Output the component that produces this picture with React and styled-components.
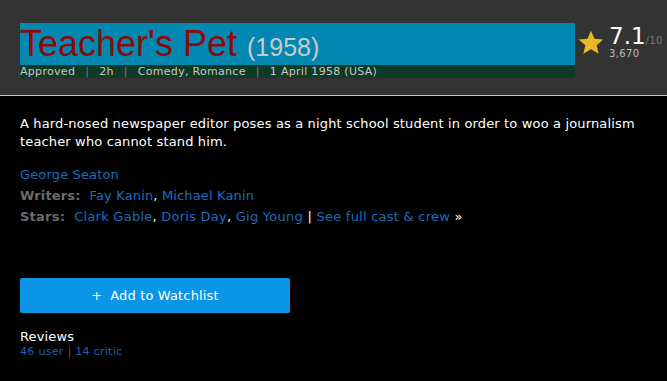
import React from "react";
import styled, { createGlobalStyle } from "styled-components";

const Global = createGlobalStyle`
  html, body {
    margin: 0;
    padding: 0;
    background: #000;
  }
  body {
    font-family: "DejaVu Sans", Verdana, sans-serif;
    font-size: 13px;
  }
`;

const Page = styled.div`
  width: 667px;
  min-height: 381px;
  background: #000;
`;

const Header = styled.div`
  display: flex;
  align-items: flex-start;
  background: #333333;
  padding: 23px 0 0 20px;
  height: 72px;
  border-bottom: 1px solid #c8c8c8;
`;

const TitleBlock = styled.div`
  width: 555px;
`;

const TitleBar = styled.h1`
  margin: 0;
  height: 42px;
  background: #0288b0;
  font-family: "Liberation Sans", Arial, sans-serif;
  font-weight: normal;
  font-size: 36px;
  line-height: 42px;
  color: #8b0a0a;
  white-space: nowrap;
`;

const Year = styled.span`
  font-size: 25px;
  color: #c9c9c9;
`;

const Subtext = styled.div`
  height: 13px;
  background: #0f3a26;
  color: #c8c8c8;
  font-size: 11px;
  line-height: 13px;
  letter-spacing: 0.3px;
  white-space: nowrap;
`;

const Sep = styled.span`
  color: #777;
  margin: 0 10px;
`;

const Rating = styled.div`
  display: flex;
  align-items: flex-start;
  margin-left: 2px;
  padding-top: 5px;
`;

const Star = styled.svg`
  width: 28px;
  height: 27px;
  margin-top: 1px;
`;

const Score = styled.div`
  display: flex;
  flex-direction: column;
  margin-left: 4px;
`;

const Value = styled.div`
  color: #fff;
  font-size: 23px;
  line-height: 17px;
  span {
    font-size: 10px;
    color: #777;
    letter-spacing: 0.3px;
  }
`;

const Votes = styled.div`
  color: #bbb;
  font-size: 10px;
  line-height: 10px;
  letter-spacing: 0.4px;
`;

const Body = styled.div`
  padding: 19px 20px 0 20px;
  letter-spacing: 0.15px;
`;

const Plot = styled.p`
  margin: 0 0 13px;
  color: #fff;
  font-size: 13px;
  line-height: 18px;
`;

const Credit = styled.div`
  line-height: 21px;
  color: #fff;
  letter-spacing: ${(p) => (p.$wide ? "0.25px" : "0.15px")};
`;

const Label = styled.span`
  font-weight: bold;
  color: #6b6b6b;
  margin-right: 9px;
`;

const Link = styled.a`
  color: ${(p) => (p.$dim ? "#1a62a8" : "#1d6cbc")};
  text-decoration: none;
`;

const Button = styled.button`
  display: flex;
  align-items: center;
  justify-content: center;
  gap: 8px;
  margin-top: 51px;
  width: 270px;
  height: 35px;
  border: none;
  border-radius: 2px;
  background: #0a95e6;
  color: #fff;
  font-family: "DejaVu Sans", Verdana, sans-serif;
  font-size: 13px;
  letter-spacing: 0.15px;
`;

const Reviews = styled.div`
  margin-top: 15px;
  color: #fff;
  font-size: 13px;
  line-height: 17px;
`;

const ReviewLinks = styled.div`
  font-size: 11px;
  line-height: 14px;
  letter-spacing: 0.3px;
`;

const Bar = styled.span`
  color: ${(p) => p.$color || "#fff"};
`;

export default function App() {
  return (
    <Page>
      <Global />
      <Header>
        <TitleBlock>
          <TitleBar>
            Teacher's Pet <Year>(1958)</Year>
          </TitleBar>
          <Subtext>
            Approved<Sep>|</Sep>2h<Sep>|</Sep>Comedy, Romance<Sep>|</Sep>1 April 1958 (USA)
          </Subtext>
        </TitleBlock>
        <Rating>
          <Star viewBox="0 0 24 24">
            <path
              fill="#e8b923"
              d="M12 1.5l3.1 7.2 7.8.6-5.9 5.1 1.8 7.6L12 18l-6.8 4 1.8-7.6-5.9-5.1 7.8-.6z"
            />
          </Star>
          <Score>
            <Value>
              7.1<span>/10</span>
            </Value>
            <Votes>3,670</Votes>
          </Score>
        </Rating>
      </Header>
      <Body>
        <Plot>
          A hard-nosed newspaper editor poses as a night school student in order to woo a
          journalism teacher who cannot stand him.
        </Plot>
        <Credit>
          <Link>George Seaton</Link>
        </Credit>
        <Credit>
          <Label>Writers:</Label>
          <Link>Fay Kanin</Link>, <Link>Michael Kanin</Link>
        </Credit>
        <Credit $wide>
          <Label>Stars:</Label>
          <Link>Clark Gable</Link>, <Link>Doris Day</Link>, <Link>Gig Young</Link> |{" "}
          <Link>See full cast &amp; crew</Link> »
        </Credit>
        <Button>
          <span>+</span>
          <span>Add to Watchlist</span>
        </Button>
        <Reviews>
          Reviews
          <ReviewLinks>
            <Link $dim>46 user</Link> <Bar $color="#b33">|</Bar> <Link $dim>14 critic</Link>
          </ReviewLinks>
        </Reviews>
      </Body>
    </Page>
  );
}
